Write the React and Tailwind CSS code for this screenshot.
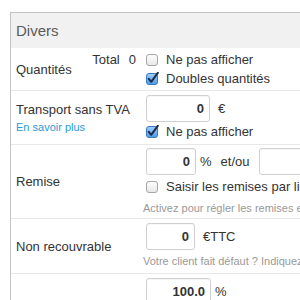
import React from "react";

function Check({ checked }) {
  return (
    <svg width="13" height="13" viewBox="0 0 13 13" className="shrink-0">
      <defs>
        <linearGradient id="cbOff" x1="0" y1="0" x2="0" y2="1">
          <stop offset="0" stopColor="#ffffff" />
          <stop offset="1" stopColor="#e6e6e6" />
        </linearGradient>
        <linearGradient id="cbOn" x1="0" y1="0" x2="0" y2="1">
          <stop offset="0" stopColor="#9fd0fb" />
          <stop offset="1" stopColor="#4a9be8" />
        </linearGradient>
      </defs>
      <rect
        x="0.5"
        y="1.5"
        width="11"
        height="11"
        rx="2.5"
        fill={checked ? "url(#cbOn)" : "url(#cbOff)"}
        stroke={checked ? "#3a78c0" : "#a6a6a6"}
      />
      {checked && (
        <path
          d="M2.8 6.8 L5.2 9.8 L11.8 0.8"
          fill="none"
          stroke="#1c2a4a"
          strokeWidth="2"
          strokeLinecap="round"
          strokeLinejoin="round"
        />
      )}
    </svg>
  );
}

function Field({ value, width }) {
  return (
    <div
      className={`h-[27px] ${width} shrink-0 border border-[#cfcfcf] rounded-[3px] bg-white flex items-center justify-end pr-[5px] font-bold text-[13px] text-[#333] shadow-[inset_0_1px_1px_rgba(0,0,0,0.04)]`}
    >
      {value}
    </div>
  );
}

function CheckLine({ checked, children }) {
  return (
    <div className="flex items-center h-[19px] whitespace-nowrap">
      <Check checked={checked} />
      <span className="ml-[7px]">{children}</span>
    </div>
  );
}

export default function App() {
  return (
    <div
      className="w-[300px] h-[300px] overflow-hidden bg-white pl-[10px] pt-[12px] text-[13px] text-[#333] leading-[19px]"
      style={{ fontFamily: '"Liberation Sans", Arial, sans-serif' }}
    >
      <div className="w-[420px] border border-[#c4c4c4]">
        {/* En-tête */}
        <div className="h-[35px] bg-[#f1f1f1] pl-[5px] text-[15px] leading-[35px] text-[#5a5a5a]">
          Divers
        </div>

        {/* Quantités */}
        <div className="flex">
          <div className="w-[135px] shrink-0 flex justify-between pl-[5px] pr-[10px]">
            <span className="self-center">Quantités</span>
            <span className="self-start pt-[2px]">
              Total<span className="ml-[9px]">0</span>
            </span>
          </div>
          <div className="flex-1 py-[2px]">
            <CheckLine>Ne pas afficher</CheckLine>
            <CheckLine checked>Doubles quantités</CheckLine>
          </div>
        </div>

        {/* Transport */}
        <div className="flex border-t border-[#e8e8e8]">
          <div className="w-[135px] shrink-0 flex flex-col justify-center pl-[5px]">
            <span className="leading-[18px]">Transport sans TVA</span>
            <span className="text-[11px] leading-[15px] text-[#2b9ad8] mt-[1px]">
              En savoir plus
            </span>
          </div>
          <div className="flex-1 pt-[4px] pb-[3px]">
            <div className="flex items-center">
              <Field value="0" width="w-[64px]" />
              <span className="ml-[8px]">€</span>
            </div>
            <CheckLine checked>Ne pas afficher</CheckLine>
          </div>
        </div>

        {/* Remise */}
        <div className="flex border-t border-[#e8e8e8]">
          <div className="w-[135px] shrink-0 flex items-center pl-[5px]">
            Remise
          </div>
          <div className="flex-1 pt-[3px] pb-[2px]">
            <div className="flex items-center">
              <Field value="0" width="w-[50px]" />
              <span className="ml-[4px]">%</span>
              <span className="ml-[9px]">et/ou</span>
              <div className="ml-[10px]">
                <Field value="0" width="w-[54px]" />
              </div>
            </div>
            <div className="mt-[2px]">
              <CheckLine>Saisir les remises par ligne</CheckLine>
            </div>
            <div className="mt-[5px] -ml-[3px] text-[11px] leading-[15px] text-[#999] whitespace-nowrap">
              Activez pour régler les remises en pourcentage
            </div>
          </div>
        </div>

        {/* Non recouvrable */}
        <div className="flex border-t border-[#e8e8e8]">
          <div className="w-[135px] shrink-0 flex items-center pl-[5px]">
            Non recouvrable
          </div>
          <div className="flex-1 pt-[4px] pb-[4px]">
            <div className="flex items-center">
              <Field value="0" width="w-[49px]" />
              <span className="ml-[8px]">€TTC</span>
            </div>
            <div className="mt-[4px] -ml-[3px] text-[11px] leading-[15px] text-[#999] whitespace-nowrap">
              Votre client fait défaut ? Indiquez le montant
            </div>
          </div>
        </div>

        {/* Pourcentage */}
        <div className="flex border-t border-[#e8e8e8]">
          <div className="w-[135px] shrink-0 pl-[5px]"></div>
          <div className="flex-1 pt-[4px] pb-[4px]">
            <div className="flex items-center">
              <Field value="100.0" width="w-[65px]" />
              <span className="ml-[4px]">%</span>
            </div>
          </div>
        </div>
      </div>
    </div>
  );
}
